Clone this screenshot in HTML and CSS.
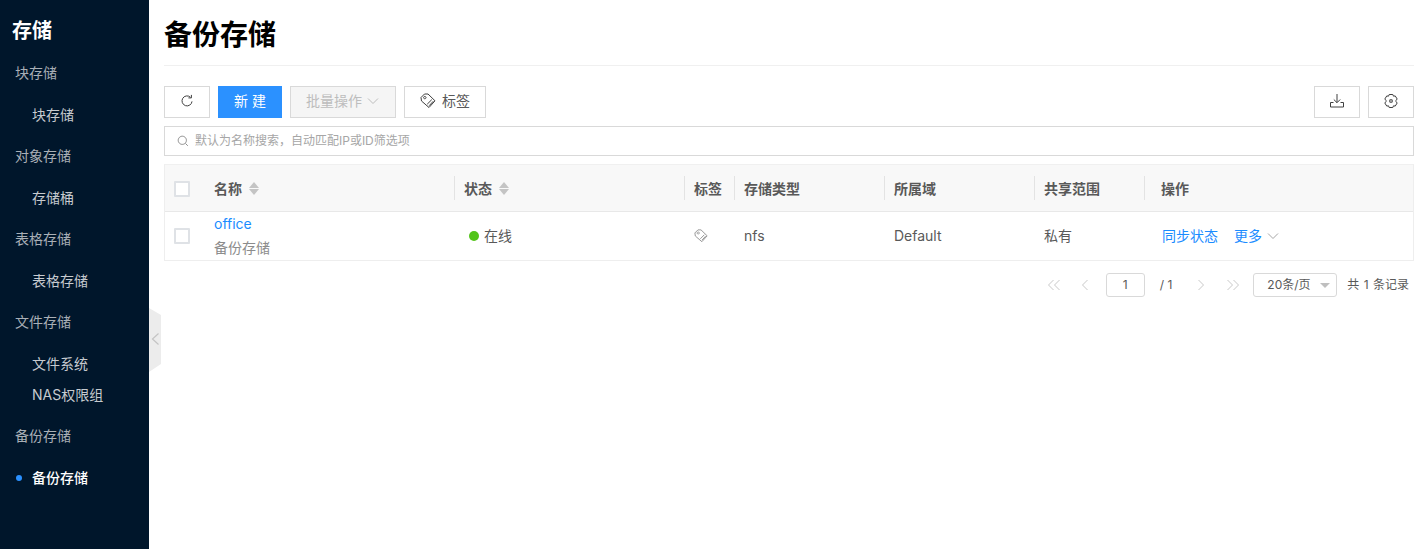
FILE: index.html
```html
<!DOCTYPE html>
<html lang="zh-CN">
<head>
<meta charset="utf-8">
<title>备份存储</title>
<link rel="stylesheet" href="styles.css">
</head>
<body>
<div class="app">
  <aside class="sidebar">
    <div class="side-title">存储</div>
    <nav class="menu">
      <div class="group">块存储</div>
      <div class="item">块存储</div>
      <div class="group">对象存储</div>
      <div class="item">存储桶</div>
      <div class="group">表格存储</div>
      <div class="item">表格存储</div>
      <div class="group">文件存储</div>
      <div class="item">文件系统</div>
      <div class="item tight">NAS权限组</div>
      <div class="group">备份存储</div>
      <div class="item active">备份存储</div>
    </nav>
    <div class="collapse">
      <svg width="12" height="64" viewBox="0 0 12 64"><path class="collapse-bg" d="M0 0L12 7V56L0 64Z"/><path class="collapse-arrow" d="M9.5 25.5L3.5 31L9.5 36.5"/></svg>
    </div>
  </aside>
  <main class="main">
    <h1 class="title">备份存储</h1>
    <div class="toolbar">
      <button class="btn btn-icon"><svg width="14" height="14" viewBox="0 0 14 14"><path class="ico" d="M12 7.4A5 5 0 1 1 10.4 3.2M11.4 0.9V3.9H8.4"/></svg></button>
      <button class="btn btn-primary">新 建</button>
      <button class="btn btn-disabled">批量操作<svg class="chev" width="12" height="12" viewBox="0 0 12 12"><path d="M1 3.5L6 8.5L11 3.5"/></svg></button>
      <button class="btn btn-tag"><svg width="16" height="16" viewBox="0 0 16 16"><path class="ico" d="M1 4.5L4.5 1H8L15 7.8L9 14.5L1.5 8ZM4.8 3.4a1.2 1.2 0 1 0 .01 0M7.2 11.2L11.8 6.6M9.2 12.7L13.3 8.2"/></svg>标签</button>
      <div class="spacer"></div>
      <button class="btn btn-icon"><svg width="16" height="16" viewBox="0 0 16 16"><path class="ico" d="M8 1V9.5M4.8 6.5L8 9.7L11.2 6.5M1.5 9.5V14H14.5V9.5M1.5 9.5H4.5M14.5 9.5H11.5"/></svg></button>
      <button class="btn btn-icon"><svg width="16" height="16" viewBox="0 0 16 16"><path class="ico" d="M6.2 1.5H9.8L10.5 3.2L12.2 2.9L14.2 6L13 7.4V8.6L14.2 10L12.2 13.1L10.5 12.8L9.8 14.5H6.2L5.5 12.8L3.8 13.1L1.8 10L3 8.6V7.4L1.8 6L3.8 2.9L5.5 3.2ZM6.8 6.8H9.2V9.2H6.8Z"/></svg></button>
    </div>
    <div class="search">
      <svg width="12" height="12" viewBox="0 0 12 12"><path class="search-ico" d="M5.3 1.2a4.1 4.1 0 1 0 .01 0M8.4 8.4L10.8 10.8"/></svg>
      <span>默认为名称搜索，自动匹配IP或ID筛选项</span>
    </div>
    <div class="table">
      <div class="row head">
        <div class="cell c-check"><span class="checkbox"></span></div>
        <div class="cell c-name">名称<span class="sort"><i class="up"></i><i class="down"></i></span></div>
        <div class="cell c-status sep">状态<span class="sort"><i class="up"></i><i class="down"></i></span></div>
        <div class="cell c-tag sep">标签</div>
        <div class="cell c-type sep">存储类型</div>
        <div class="cell c-region sep">所属域</div>
        <div class="cell c-share sep">共享范围</div>
        <div class="cell c-ops sep ops-head">操作</div>
      </div>
      <div class="row body">
        <div class="cell c-check"><span class="checkbox"></span></div>
        <div class="cell c-name name-stack"><a class="link">office</a><span class="muted">备份存储</span></div>
        <div class="cell c-status"><span class="dot"></span>在线</div>
        <div class="cell c-tag"><svg width="14" height="14" viewBox="0 0 16 16"><path class="ico-light" d="M1 4.5L4.5 1H8L15 7.8L9 14.5L1.5 8ZM4.8 3.4a1.2 1.2 0 1 0 .01 0M7.2 11.2L11.8 6.6M9.2 12.7L13.3 8.2"/></svg></div>
        <div class="cell c-type">nfs</div>
        <div class="cell c-region">Default</div>
        <div class="cell c-share">私有</div>
        <div class="cell c-ops ops-body"><a class="link">同步状态</a><a class="link more">更多</a><svg class="more-chev" width="12" height="12" viewBox="0 0 12 12"><path d="M1 3.5L6 8.5L11 3.5"/></svg></div>
      </div>
    </div>
    <div class="pager">
      <svg class="pg" width="14" height="12" viewBox="0 0 14 12"><path d="M6.5 1L1.5 6L6.5 11M12.5 1L7.5 6L12.5 11"/></svg>
      <svg class="pg pg-prev" width="8" height="12" viewBox="0 0 8 12"><path d="M6.5 1L1.5 6L6.5 11"/></svg>
      <span class="page-input">1</span>
      <span class="page-total">/ 1</span>
      <svg class="pg pg-next" width="8" height="12" viewBox="0 0 8 12"><path d="M1.5 1L6.5 6L1.5 11"/></svg>
      <svg class="pg pg-last" width="14" height="12" viewBox="0 0 14 12"><path d="M1.5 1L6.5 6L1.5 11M7.5 1L12.5 6L7.5 11"/></svg>
      <span class="page-size">20条/页<i class="caret"></i></span>
      <span class="page-count">共 1 条记录</span>
    </div>
  </main>
</div>
</body>
</html>
```
FILE: styles.css
```css
* { box-sizing: border-box; }
html, body { margin: 0; height: 100%; }
body {
  font-family: Inter, "Noto Sans CJK SC", sans-serif;
  font-size: 14px;
  line-height: 20px;
  color: #595959;
  background: #fff;
  overflow: hidden;
}
.app { display: flex; height: 549px; }

.sidebar {
  position: relative;
  flex: 0 0 149px;
  background: #00162b;
  color: #bfc4ca;
}
.side-title {
  padding: 17px 0 0 12px;
  font-size: 20px;
  line-height: 28px;
  font-weight: 700;
  color: #fff;
}
.menu { padding-top: 7px; }
.group { height: 41px; padding: 11px 0 0 15px; color: #a9afb6; }
.item { height: 42px; padding: 12px 0 0 32px; color: #c6cacf; position: relative; }
.item.tight { height: 31px; padding-top: 1px; }
.item.active { color: #fff; font-weight: 500; }
.item.active::before {
  content: "";
  position: absolute;
  left: 16px;
  top: 19px;
  width: 6px;
  height: 6px;
  border-radius: 50%;
  background: #2a90ff;
}
.collapse { position: absolute; left: 149px; top: 308px; width: 12px; height: 64px; }
.collapse svg { display: block; }
.collapse-bg { fill: #ececec; }
.collapse-arrow { fill: none; stroke: #c4c4c4; stroke-width: 1.2; }

.main { flex: 1; min-width: 0; padding: 0 11px 0 15px; }
.title {
  margin: 0;
  height: 66px;
  padding-top: 16px;
  font-size: 28px;
  line-height: 38px;
  font-weight: 700;
  color: #000;
  border-bottom: 1px solid #f0f0f0;
}

.toolbar { display: flex; gap: 8px; margin-top: 20px; height: 32px; }
.spacer { flex: 1; }
.btn {
  display: inline-flex;
  align-items: center;
  justify-content: center;
  height: 32px;
  padding: 0 0 2px;
  border: 1px solid #d9d9d9;
  background: #fff;
  font: inherit;
  color: #595959;
}
.btn-icon { width: 46px; padding: 0 0 2px; }
.btn-primary { width: 64px; background: #2b91ff; border-color: #2b91ff; color: #fff; }
.btn-disabled { width: 106px; justify-content: flex-start; padding-left: 15px; background: #f5f5f5; color: #bdbdbd; }
.btn-tag { width: 82px; gap: 6px; }
.chev { margin-left: 5px; fill: none; stroke: #bdbdbd; stroke-width: 1; }
.ico { fill: none; stroke: #404040; stroke-width: 1; }
.ico-light { fill: none; stroke: #8c8c8c; stroke-width: 1; }

.search {
  display: flex;
  align-items: center;
  gap: 6px;
  height: 30px;
  margin-top: 8px;
  padding-left: 12px;
  border: 1px solid #d9d9d9;
  font-size: 12px;
  color: #a6a6a6;
}
.search-ico { fill: none; stroke: #8c8c8c; stroke-width: 1; }

.table { margin-top: 8px; border: 1px solid #eee; border-top-color: #f0f0f0; }
.row { display: flex; }
.head { height: 47px; background: #f8f8f8; border-bottom: 1px solid #e8e8e8; font-weight: 600; }
.head .cell { padding-top: 1px; }
.body { height: 48px; }
.cell { display: flex; align-items: center; padding-left: 10px; position: relative; white-space: nowrap; }
.sep::before {
  content: "";
  position: absolute;
  left: 0;
  top: 11px;
  bottom: 11px;
  width: 1px;
  background: #e3e3e3;
}
.c-check { width: 39px; padding-left: 9px; }
.c-name { width: 250px; }
.c-status { width: 230px; }
.c-tag { width: 50px; }
.c-type { width: 150px; }
.c-region { width: 150px; }
.c-share { width: 110px; }
.c-ops { flex: 1; }
.ops-head { padding-left: 17px; }
.ops-body { padding-left: 18px; }
.checkbox { display: block; width: 16px; height: 16px; border: 2px solid #dfe2e6; background: #fff; border-radius: 1px; }

.sort { display: inline-flex; flex-direction: column; gap: 1px; margin-left: 7px; }
.sort i { display: block; width: 0; height: 0; border-left: 5px solid transparent; border-right: 5px solid transparent; }
.sort .up { border-bottom: 6px solid #c4c4c4; }
.sort .down { border-top: 6px solid #c4c4c4; }

.name-stack { flex-direction: column; align-items: flex-start; justify-content: center; gap: 4px; }
.link { color: #1a8cff; }
.muted { color: #8c8c8c; }
.dot { width: 10px; height: 10px; margin: 0 5px; border-radius: 50%; background: #52c41a; }
.more { margin-left: 16px; }
.more-chev { margin-left: 5px; fill: none; stroke: #a6a6a6; stroke-width: 1; }

.pager { display: flex; align-items: center; height: 24px; margin-top: 12px; padding-right: 5px; justify-content: flex-end; font-size: 12px; }
.pg { fill: none; stroke: #c9c9c9; stroke-width: 1; flex: none; }
.pg-prev { margin-left: 20px; }
.page-input {
  width: 39px;
  height: 24px;
  margin-left: 17px;
  border: 1px solid #d9d9d9;
  border-radius: 3px;
  text-align: center;
  line-height: 22px;
}
.page-total { margin-left: 15px; }
.pg-next { margin-left: 25px; }
.pg-last { margin-left: 21px; }
.page-size {
  position: relative;
  width: 84px;
  height: 24px;
  margin-left: 13px;
  padding-left: 13px;
  border: 1px solid #d9d9d9;
  border-radius: 3px;
  line-height: 22px;
}
.caret {
  position: absolute;
  right: 6px;
  top: 9px;
  width: 0;
  height: 0;
  border-left: 5px solid transparent;
  border-right: 5px solid transparent;
  border-top: 5px solid #bfbfbf;
}
.page-count { margin-left: 10px; word-spacing: 1px; }
```
